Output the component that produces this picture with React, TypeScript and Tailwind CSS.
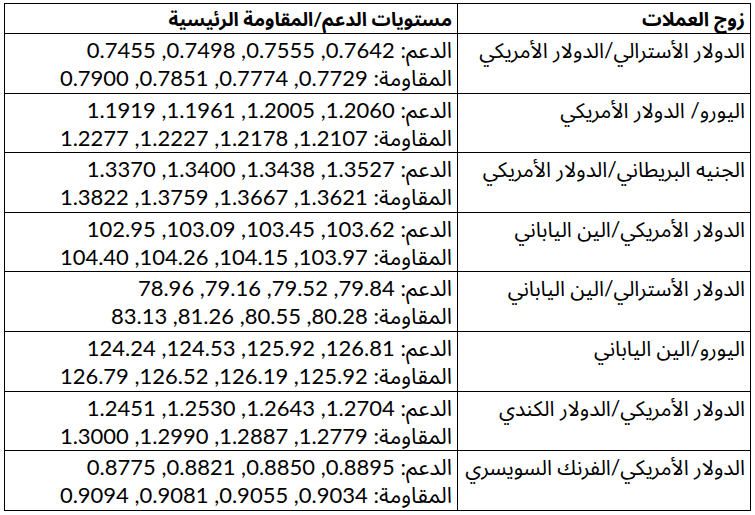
import React from "react";

const rows = [
  {
    pair: "الدولار الأسترالي/الدولار الأمريكي",
    support: "0.7642, 0.7555, 0.7498, 0.7455",
    resistance: "0.7729, 0.7774, 0.7851, 0.7900",
  },
  {
    pair: "اليورو/ الدولار الأمريكي",
    support: "1.2060, 1.2005, 1.1961, 1.1919",
    resistance: "1.2107, 1.2178, 1.2227, 1.2277",
  },
  {
    pair: "الجنيه البريطاني/الدولار الأمريكي",
    support: "1.3527, 1.3438, 1.3400, 1.3370",
    resistance: "1.3621, 1.3667, 1.3759, 1.3822",
  },
  {
    pair: "الدولار الأمريكي/الين الياباني",
    support: "103.62, 103.45, 103.09, 102.95",
    resistance: "103.97, 104.15, 104.26, 104.40",
  },
  {
    pair: "الدولار الأسترالي/الين الياباني",
    support: "79.84, 79.52, 79.16, 78.96",
    resistance: "80.28, 80.55, 81.26, 83.13",
  },
  {
    pair: "اليورو/الين الياباني",
    support: "126.81, 125.92, 124.53, 124.24",
    resistance: "125.92, 126.19, 126.52, 126.79",
  },
  {
    pair: "الدولار الأمريكي/الدولار الكندي",
    support: "1.2704, 1.2643, 1.2530, 1.2451",
    resistance: "1.2779, 1.2887, 1.2990, 1.3000",
  },
  {
    pair: "الدولار الأمريكي/الفرنك السويسري",
    support: "0.8895, 0.8850, 0.8821, 0.8775",
    resistance: "0.9034, 0.9055, 0.9081, 0.9094",
  },
];

export default function App() {
  return (
    <div className="w-[755px] h-[515px] bg-white pt-[3px] pl-[4px] font-['Lato','Noto_Sans_Arabic','DejaVu_Sans',sans-serif] text-black">
      <table dir="rtl" className="w-[746px] border-collapse table-fixed">
        <colgroup>
          <col className="w-[293px]" />
          <col className="w-[453px]" />
        </colgroup>
        <thead>
          <tr className="h-[30px]">
            <th className="border-[1.5px] border-black px-[5px] text-right align-middle font-bold text-[19.5px] leading-[28px]">
              زوج العملات
            </th>
            <th className="border-[1.5px] border-black px-[5px] text-right align-middle font-bold text-[19px] leading-[28px]">
              مستويات الدعم/المقاومة الرئيسية
            </th>
          </tr>
        </thead>
        <tbody>
          {rows.map((r) => (
            <tr key={r.pair} className="h-[59.6px]">
              <td className="border-[1.5px] border-black px-[5px] pt-[2px] align-top text-right text-[21px] leading-[28px] whitespace-nowrap">
                {r.pair}
              </td>
              <td className="border-[1.5px] border-black px-[5px] pt-[2px] align-top text-right text-[22px] leading-[28px] whitespace-nowrap">
                <div>الدعم: {r.support}</div>
                <div>المقاومة: {r.resistance}</div>
              </td>
            </tr>
          ))}
        </tbody>
      </table>
    </div>
  );
}
